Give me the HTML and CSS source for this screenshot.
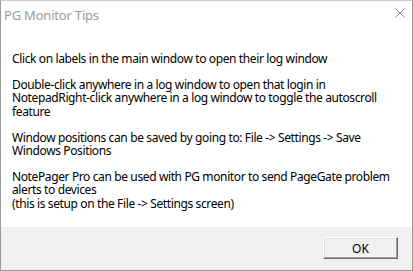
FILE: index.html
```html
<!DOCTYPE html>
<html lang="en">
<head>
    <meta charset="UTF-8">
    <title>PG Monitor Tips</title>
    <link rel="stylesheet" href="styles.css">
</head>
<body>
    <div class="dialog">
        <div class="titlebar">
            <div class="caption">PG Monitor Tips</div>
            <div class="close">
                <svg width="10" height="10" viewBox="0 0 10 10">
                    <path d="M0.5 0.5 L9.5 9.5 M9.5 0.5 L0.5 9.5" stroke="#8a8a8a" stroke-width="1" fill="none"/>
                </svg>
            </div>
        </div>
        <div class="content">
            <p>Click on labels in the main window to open their log window</p>
            <p>Double-click anywhere in a log window to open that login in<br>NotepadRight-click anywhere in a log window to toggle the autoscroll<br>feature</p>
            <p>Window positions can be saved by going to: File -&gt; Settings -&gt; Save<br>Windows Positions</p>
            <p>NotePager Pro can be used with PG monitor to send PageGate problem<br>alerts to devices<br>(this is setup on the File -&gt; Settings screen)</p>
        </div>
        <div class="footer">
            <button class="ok">OK</button>
        </div>
    </div>
</body>
</html>
```

FILE: styles.css
```css
body {
    margin: 0;
    background-color: #fff;
    font-family: "Noto Sans", "Segoe UI", sans-serif;
}
.dialog {
    width: 413px;
    height: 271px;
    box-sizing: border-box;
    border: 1px solid #9a9a9a;
    border-top-color: #c8c8c8;
    display: flex;
    flex-direction: column;
    background-color: #fff;
}
.titlebar {
    height: 29px;
    flex-shrink: 0;
    display: flex;
    align-items: center;
    justify-content: space-between;
    padding-left: 3px;
}
.caption {
    font-size: 13px;
    letter-spacing: -0.2px;
    color: #9b9b9b;
    margin-top: -2px;
}
.close {
    width: 46px;
    height: 29px;
    display: flex;
    align-items: center;
    justify-content: center;
    margin-top: -5px;
    margin-right: -11px;
}
.content {
    flex: 1;
    padding: 22px 11px 0;
    font-size: 12px;
    letter-spacing: -0.38px;
    line-height: 13.2px;
    color: #000;
    white-space: nowrap;
}
.content p {
    margin: 0 0 13px;
}
.footer {
    height: 43px;
    flex-shrink: 0;
    background-color: #f0f0f0;
    display: flex;
    justify-content: flex-end;
    align-items: flex-start;
    padding: 10px 14px 0 0;
    box-sizing: border-box;
}
.ok {
    width: 75px;
    height: 22px;
    font-family: "Noto Sans", "Segoe UI", sans-serif;
    font-size: 12px;
    color: #000;
    background-color: #f0f0f0;
    border: 1px solid;
    border-color: #fff #6d6d6d #6d6d6d #fff;
    box-shadow: inset -1px -1px 0 #a0a0a0, inset 1px 1px 0 #e3e3e3;
    padding: 0;
}
```
